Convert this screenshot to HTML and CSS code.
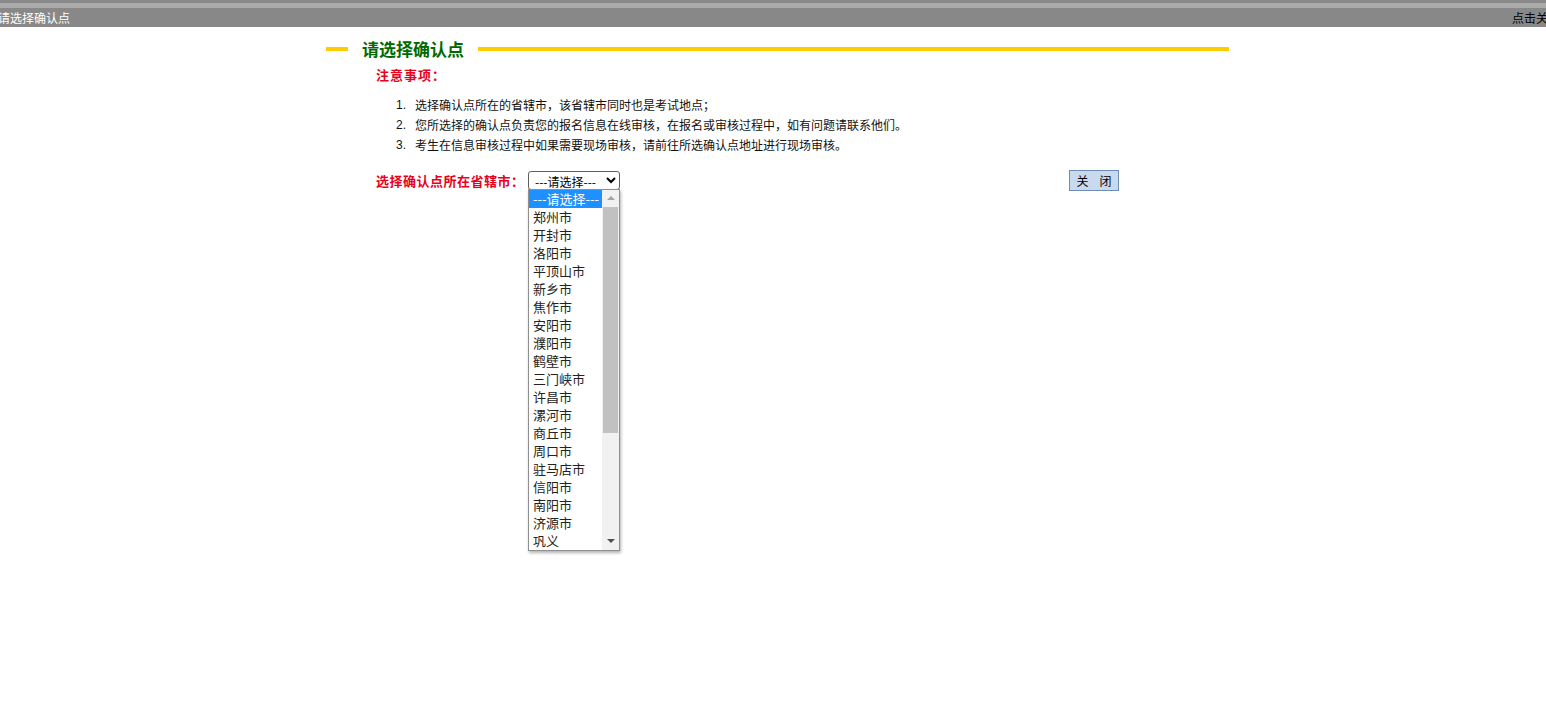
FILE: index.html
```html
<!DOCTYPE html>
<html lang="zh-CN">
<head>
<meta charset="utf-8">
<title>请选择确认点</title>
<link rel="stylesheet" href="styles.css">
</head>
<body>
<div class="strip-dark"></div>
<div class="strip-light"></div>
<div class="header">
  <span class="header-title">请选择确认点</span>
  <span class="header-close">点击关闭</span>
</div>
<div class="main">
  <div class="title-row">
    <span class="line-short"></span>
    <span class="title-text">请选择确认点</span>
    <span class="line-long"></span>
  </div>
  <div class="content">
    <div class="notice">注意事项：</div>
    <div class="list">
      <div class="item"><span class="num">1.</span><span>选择确认点所在的省辖市，该省辖市同时也是考试地点；</span></div>
      <div class="item"><span class="num">2.</span><span>您所选择的确认点负责您的报名信息在线审核，在报名或审核过程中，如有问题请联系他们。</span></div>
      <div class="item"><span class="num">3.</span><span>考生在信息审核过程中如果需要现场审核，请前往所选确认点地址进行现场审核。</span></div>
    </div>
    <div class="select-row">
      <span class="label">选择确认点所在省辖市：</span>
      <div class="select-wrap">
        <select class="city-select">
          <option>---请选择---</option>
        </select>
        <div class="dropdown">
          <div class="options">
            <div class="opt active">---请选择---</div>
            <div class="opt">郑州市</div>
            <div class="opt">开封市</div>
            <div class="opt">洛阳市</div>
            <div class="opt">平顶山市</div>
            <div class="opt">新乡市</div>
            <div class="opt">焦作市</div>
            <div class="opt">安阳市</div>
            <div class="opt">濮阳市</div>
            <div class="opt">鹤壁市</div>
            <div class="opt">三门峡市</div>
            <div class="opt">许昌市</div>
            <div class="opt">漯河市</div>
            <div class="opt">商丘市</div>
            <div class="opt">周口市</div>
            <div class="opt">驻马店市</div>
            <div class="opt">信阳市</div>
            <div class="opt">南阳市</div>
            <div class="opt">济源市</div>
            <div class="opt">巩义</div>
          </div>
          <div class="scrollbar">
            <div class="sb-btn"><span class="arrow-up"></span></div>
            <div class="sb-thumb"></div>
            <div class="sb-track"></div>
            <div class="sb-btn"><span class="arrow-down"></span></div>
          </div>
        </div>
      </div>
      <button class="close-btn" type="button"><span>关</span><span>闭</span></button>
    </div>
  </div>
</div>
</body>
</html>
```

FILE: styles.css
```css
html, body {
  margin: 0;
  padding: 0;
  background: #ffffff;
  font-family: "Noto Sans CJK SC", "Liberation Sans", sans-serif;
  font-size: 12px;
  color: #000;
}

body {
  min-height: 702px;
}

.strip-dark {
  height: 3px;
  background: #898989;
}

.strip-light {
  height: 5px;
  background: #ababab;
}

.header {
  height: 19px;
  background: #888888;
  display: flex;
  justify-content: space-between;
  align-items: center;
  overflow: hidden;
  white-space: nowrap;
  font-size: 12px;
  line-height: 19px;
}

.header-title {
  color: #ffffff;
  margin-left: -2px;
}

.header-close {
  color: #000000;
  margin-right: -14px;
}

.main {
  margin-left: 326px;
  width: 903px;
  padding-top: 12px;
}

.title-row {
  display: flex;
  align-items: center;
  height: 20px;
}

.line-short {
  width: 22px;
  height: 4px;
  background: #ffcc00;
}

.title-text {
  margin-left: 14px;
  margin-right: 14px;
  font-size: 17px;
  font-weight: bold;
  color: #006a00;
  line-height: 20px;
}

.line-long {
  flex: 1;
  height: 4px;
  background: #ffcc00;
}

.content {
  padding-left: 50px;
}

.notice {
  margin-top: 8px;
  font-size: 13px;
  font-weight: bold;
  letter-spacing: 1px;
  color: #e8001c;
  line-height: 16px;
}

.list {
  margin-top: 12px;
  padding-left: 20px;
}

.item {
  display: flex;
  line-height: 20px;
  font-size: 12px;
  color: #111;
}

.num {
  width: 19px;
  font-family: "Liberation Sans", sans-serif;
  font-size: 12px;
}

.select-row {
  margin-top: 15px;
  display: flex;
  align-items: center;
  height: 20px;
  padding-right: 110px;
}

.label {
  font-size: 13px;
  font-weight: bold;
  letter-spacing: 0.5px;
  color: #e8001c;
  width: 152px;
  flex-shrink: 0;
  white-space: nowrap;
}

.select-wrap {
  position: relative;
  width: 92px;
  height: 19px;
  flex-shrink: 0;
}

.city-select {
  width: 92px;
  height: 19px;
  margin: 0;
  padding: 0 0 0 2px;
  border: 1px solid #5f5f5f;
  border-radius: 3px;
  background: #fff;
  font-family: "Noto Sans CJK SC", sans-serif;
  font-size: 12px;
  color: #000;
  box-sizing: border-box;
}

.dropdown {
  position: absolute;
  top: 18px;
  left: 0;
  width: 92px;
  height: 362px;
  box-sizing: border-box;
  border: 1px solid #8f8f8f;
  background: #fff;
  box-shadow: 1px 2px 3px rgba(0, 0, 0, 0.3);
  display: flex;
  z-index: 5;
}

.options {
  flex: 1;
  display: flex;
  flex-direction: column;
}

.opt {
  height: 18px;
  line-height: 18px;
  padding-left: 4px;
  font-size: 13px;
  color: #222;
  white-space: nowrap;
}

.opt.active {
  background: #1e90ff;
  color: #fff;
}

.scrollbar {
  width: 17px;
  background: #f1f1f1;
  display: flex;
  flex-direction: column;
}

.sb-btn {
  height: 17px;
  display: flex;
  align-items: center;
  justify-content: center;
}

.arrow-up {
  width: 0;
  height: 0;
  border-left: 4px solid transparent;
  border-right: 4px solid transparent;
  border-bottom: 4px solid #a3a3a3;
}

.arrow-down {
  width: 0;
  height: 0;
  border-left: 4px solid transparent;
  border-right: 4px solid transparent;
  border-top: 4px solid #505050;
}

.sb-thumb {
  height: 226px;
  margin: 0 1px;
  background: #c1c1c1;
}

.sb-track {
  flex: 1;
}

.close-btn {
  margin-left: auto;
  width: 50px;
  height: 21px;
  padding: 0;
  border: 1px solid #6d8db3;
  background: #c9d9ee;
  font-family: "Noto Sans CJK SC", sans-serif;
  font-size: 12px;
  color: #000;
  line-height: 19px;
  display: flex;
  justify-content: center;
  align-items: center;
  gap: 11px;
}
```
